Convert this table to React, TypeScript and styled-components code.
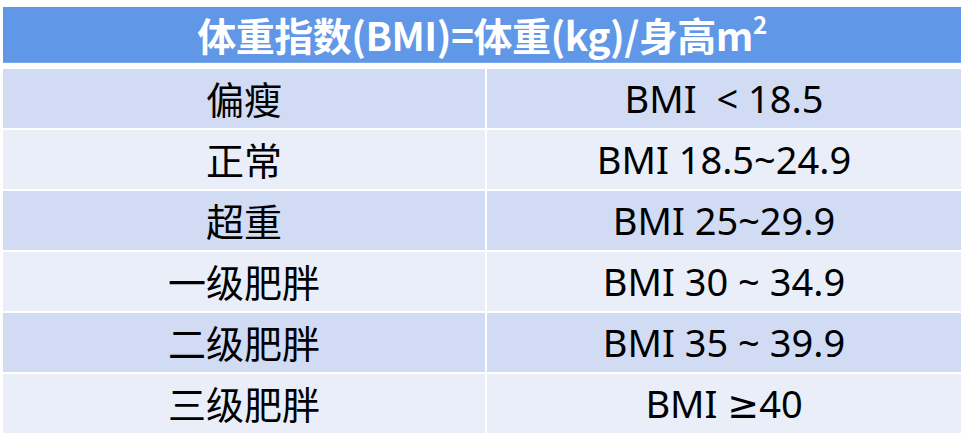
import React from 'react';
import styled, { createGlobalStyle } from 'styled-components';

const GlobalStyle = createGlobalStyle`
  body {
    margin: 0;
    background: #ffffff;
    font-family: "Noto Sans", "Noto Sans CJK SC", sans-serif;
  }
`;

const Page = styled.div`
  padding: 7px 6px 0 3px;
`;

const Table = styled.div`
  display: grid;
  grid-template-columns: 482px 474px;
  column-gap: 2px;
  row-gap: 2px;
  width: 958px;
`;

const Header = styled.div`
  grid-column: 1 / span 2;
  height: 56px;
  margin-bottom: 4px;
  background: #6097e6;
  border-bottom: 1px solid #7aa8ec;
  box-sizing: border-box;
  display: flex;
  align-items: center;
  justify-content: center;
`;

const Title = styled.span`
  color: #ffffff;
  font-family: "Noto Sans CJK SC", sans-serif;
  font-weight: 700;
  font-size: 39px;
  line-height: 1;
  letter-spacing: -0.5px;
  white-space: nowrap;
`;

const Sup = styled.sup`
  font-size: 0.62em;
  line-height: 0;
  vertical-align: 0.7em;
`;

const Cell = styled.div<{ $shade: boolean }>`
  height: 59px;
  padding-bottom: 2px;
  box-sizing: border-box;
  display: flex;
  align-items: center;
  justify-content: center;
  background: ${p => (p.$shade ? '#d1dbf3' : '#e9eef8')};
  color: #000000;
  font-size: 38px;
  white-space: pre;
  font-family: "Noto Sans", "DejaVu Sans", "Noto Sans CJK SC", sans-serif;
`;

const rows: [string, string][] = [
  ['偏瘦', 'BMI  < 18.5'],
  ['正常', 'BMI 18.5~24.9'],
  ['超重', 'BMI 25~29.9'],
  ['一级肥胖', 'BMI 30 ~ 34.9'],
  ['二级肥胖', 'BMI 35 ~ 39.9'],
  ['三级肥胖', 'BMI ≥40'],
];

export default function App() {
  return (
    <Page>
      <GlobalStyle />
      <Table>
        <Header>
          <Title>
            体重指数(BMI)=体重(kg)/身高m<Sup>2</Sup>
          </Title>
        </Header>
        {rows.map(([label, range], i) => (
          <React.Fragment key={label}>
            <Cell $shade={i % 2 === 0}>{label}</Cell>
            <Cell $shade={i % 2 === 0}>{range}</Cell>
          </React.Fragment>
        ))}
      </Table>
    </Page>
  );
}
